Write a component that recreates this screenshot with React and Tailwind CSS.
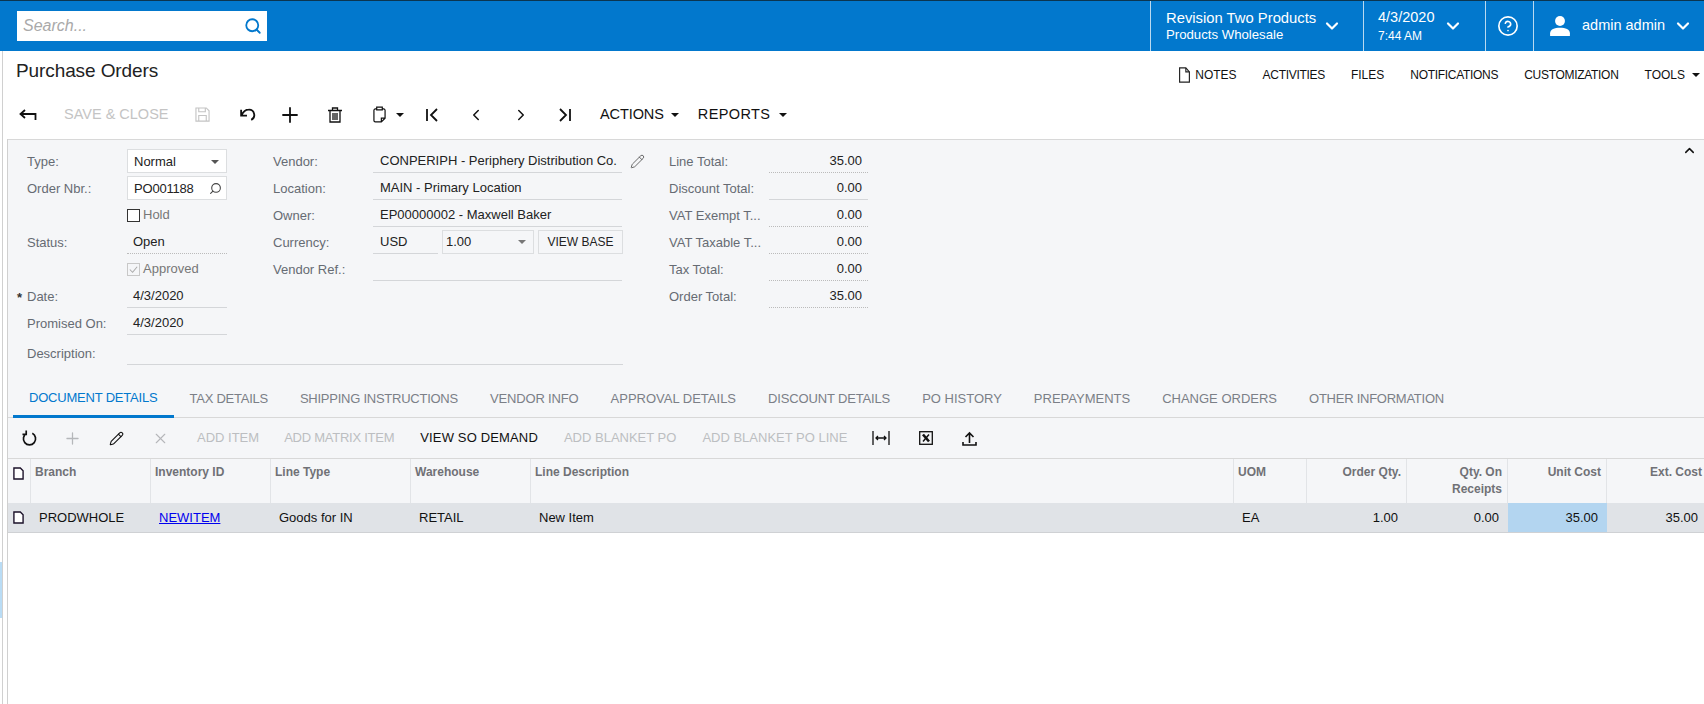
import { ChevronDown, ChevronUp, CircleHelp, Search, Plus, Pencil, X, ChevronLeft, ChevronRight } from "lucide-react";

const Caret = ({ className = "" }) => (
  <span className={`inline-block w-0 h-0 border-x-[4px] border-x-transparent border-t-[4px] border-t-current ${className}`} />
);

const DocIcon = ({ className = "" }) => (
  <svg viewBox="0 0 14 18" className={className} fill="none" stroke="currentColor" strokeWidth="1.3">
    <path d="M1.5 1h7l4 4.5V17h-11z" />
    <path d="M8.5 1v4.5h4" />
  </svg>
);

const RowDoc = () => (
  <svg viewBox="0 0 12 14" className="w-[11px] h-[13px] text-[#1a1028]" fill="#fff" stroke="currentColor" strokeWidth="1.5">
    <path d="M1 1h7l3 3v9H1z" />
  </svg>
);

function Field({ label, star, children }) {
  return (
    <div className="flex items-center h-[27px]">
      <div className="w-[119px] pl-[19px] relative text-[#666b73] truncate">
        {star && <span className="absolute left-[9px] top-[1px] font-bold text-[#333]">*</span>}
        {label}
      </div>
      {children}
    </div>
  );
}

const Under = ({ className = "", dotted, children }) => (
  <div className={`h-[24px] mb-[1px] pt-[1px] flex items-center border-b ${dotted ? "border-dotted border-[#bbb]" : "border-[#d4d6d9]"} ${className}`}>{children}</div>
);

const tabs = [
  ["TAX DETAILS", "tracking-[-0.25px]"],
  ["SHIPPING INSTRUCTIONS", "tracking-[-0.25px]"],
  ["VENDOR INFO", "tracking-[-0.15px]"],
  ["APPROVAL DETAILS", "tracking-normal"],
  ["DISCOUNT DETAILS", "tracking-[-0.15px]"],
  ["PO HISTORY", "tracking-normal"],
  ["PREPAYMENTS", "tracking-normal"],
  ["CHANGE ORDERS", "tracking-normal"],
  ["OTHER INFORMATION", "tracking-[-0.25px]"],
];
const totals = [
  ["Line Total:", "35.00", true],
  ["Discount Total:", "0.00", false],
  ["VAT Exempt T...", "0.00", true],
  ["VAT Taxable T...", "0.00", true],
  ["Tax Total:", "0.00", true],
  ["Order Total:", "35.00", true],
];

const HeadCell = ({ className = "", children }) => (
  <div className={`h-full border-r border-[#e2e4e7] pl-[4px] pr-[5px] pt-[5px] font-bold text-[12px] leading-[17px] text-[#707176] ${className}`}>{children}</div>
);

const Cell = ({ className = "", children }) => (
  <div className={`h-full flex items-center pt-[1px] pl-[8px] pr-[9px] ${className}`}>{children}</div>
);

export default function App() {
  return (
    <div className="w-[1704px] h-[704px] overflow-hidden bg-white text-[13px] text-[#222] font-['Liberation_Sans',Arial,sans-serif]">
      {/* top bar */}
      <div className="h-[51px] flex items-stretch bg-[#0278cd] border-t border-[#0b3550] text-white">
        <div className="flex-1 pl-[17px] pt-[10px]">
          <div className="w-[250px] h-[30px] bg-white flex items-center justify-between pl-[6px] pr-[5px]">
            <span className="italic text-[16px] text-[#a9a9a9]">Search...</span>
            <Search className="w-[18px] h-[18px] text-[#0278cd]" strokeWidth={2.4} />
          </div>
        </div>
        <div className="w-[213px] border-l border-[#b9d9f0] pl-[15px] flex items-center">
          <div className="w-[153px] leading-none">
            <div className="text-[14.8px]">Revision Two Products</div>
            <div className="text-[13.2px] mt-[3px]">Products Wholesale</div>
          </div>
          <ChevronDown className="w-[20px] h-[20px] ml-[3px]" strokeWidth={2.6} />
        </div>
        <div className="w-[122px] border-l border-[#b9d9f0] pl-[14px] flex items-center">
          <div className="w-[65px] leading-none">
            <div className="text-[14.5px]">4/3/2020</div>
            <div className="text-[12px] mt-[5px]">7:44 AM</div>
          </div>
          <ChevronDown className="w-[20px] h-[20px]" strokeWidth={2.6} />
        </div>
        <div className="w-[48px] border-l border-[#b9d9f0] flex items-center justify-center pr-[3px]">
          <CircleHelp className="w-[22px] h-[22px]" strokeWidth={1.8} />
        </div>
        <div className="w-[171px] border-l border-[#b9d9f0] flex items-center pl-[15px]">
          <svg viewBox="0 0 20 20" className="w-[22px] h-[22px]" fill="currentColor">
            <circle cx="10" cy="5.5" r="4.5" />
            <path d="M1 19v-2.5C1 13 5 11.5 10 11.5s9 1.5 9 5V19z" />
          </svg>
          <span className="text-[14.5px] ml-[11px]">admin admin</span>
          <ChevronDown className="w-[20px] h-[20px] ml-[8px]" strokeWidth={2.6} />
        </div>
      </div>

      <div className="relative ml-[2px] border-l border-[#d0d0d0] h-[653px]">
        <div className="absolute -left-[3px] top-[511px] w-[2px] h-[56px] bg-[#b9dcf5]" />

        {/* title row */}
        <div className="h-[45px] flex items-center justify-between pl-[13px] pr-[4px]">
          <div className="text-[19px] tracking-[-0.1px] text-[#222] -mt-[5px]">Purchase Orders</div>
          <div className="flex items-center text-[12px] text-[#111] mt-[2px]">
            <DocIcon className="w-[13px] h-[16px] text-[#222] mr-[4px]" />
            <span>NOTES</span>
            <span className="ml-[26px] tracking-[-0.3px]">ACTIVITIES</span>
            <span className="ml-[26px]">FILES</span>
            <span className="ml-[26px] tracking-[-0.3px]">NOTIFICATIONS</span>
            <span className="ml-[26px] tracking-[-0.3px]">CUSTOMIZATION</span>
            <span className="ml-[26px]">TOOLS</span>
            <Caret className="ml-[7px]" />
          </div>
        </div>

        {/* main toolbar */}
        <div className="h-[43px] flex items-center text-[#111] pb-[6px]">
          <svg viewBox="0 0 18 12" className="w-[18px] h-[12px] ml-[16px]" fill="none" stroke="currentColor" strokeWidth="1.8">
            <path d="M6 1 1.5 5 6 9M2 5h14.5v6" />
          </svg>
          <span className="ml-[27px] w-[106px] text-[14.5px] text-[#c4c4c4] whitespace-nowrap">SAVE &amp; CLOSE</span>
          <svg viewBox="0 0 16 16" className="w-[15px] h-[15px] ml-[25px] text-[#c4c4c4]" fill="none" stroke="currentColor" strokeWidth="1.2">
            <path d="M1 1h11l3 3v11H1zM4 1v4h7V1M4 15V9h8v6" />
          </svg>
          <svg viewBox="0 0 16 14" className="w-[17px] h-[15px] ml-[29px]" fill="none" stroke="currentColor" strokeWidth="1.7">
            <path d="M2 2.5V8h5.5M2.500 7.500C4 4.500 6.500 2.500 9 2.500a5 5 0 0 1 2.500 9.500" />
          </svg>
          <Plus className="w-[24px] h-[24px] ml-[22px]" strokeWidth={1.8} />
          <svg viewBox="0 0 14 16" className="w-[14px] h-[16px] ml-[26px]" fill="none" stroke="currentColor" strokeWidth="1.3">
            <path d="M0 3.500h14M4.500 3V1h5v2M2 3.500V15h10V3.500M5 6v7M7 6v7M9 6v7" />
          </svg>
          <svg viewBox="0 0 14 18" className="w-[13px] h-[17px] ml-[31px]" fill="none" stroke="currentColor" strokeWidth="1.3">
            <path d="M4 3H2.500A1.500 1.500 0 0 0 1 4.500v11A1.500 1.500 0 0 0 2.500 17H9l4-4V4.500A1.500 1.500 0 0 0 11.500 3H10M4 1h6v3H4zM9 17v-4h4" />
          </svg>
          <Caret className="ml-[10px]" />
          <svg viewBox="0 0 14 14" className="w-[14px] h-[14px] ml-[21px]" fill="none" stroke="currentColor" strokeWidth="1.8">
            <path d="M2 1v12M12 1 6 7l6 6" />
          </svg>
          <ChevronLeft className="w-[18px] h-[18px] ml-[28px]" strokeWidth={2} />
          <ChevronRight className="w-[18px] h-[18px] ml-[27px]" strokeWidth={2} />
          <svg viewBox="0 0 14 14" className="w-[14px] h-[14px] ml-[28px]" fill="none" stroke="currentColor" strokeWidth="1.8">
            <path d="M12 1v12M2 1l6 6-6 6" />
          </svg>
          <span className="ml-[28px] text-[14.5px] tracking-[-0.1px]">ACTIONS</span>
          <Caret className="ml-[7px]" />
          <span className="ml-[19px] text-[14.5px] tracking-[0.4px]">REPORTS</span>
          <Caret className="ml-[9px]" />
        </div>

        {/* form, tabs, grid */}
        <div className="ml-[4px] h-[608px] border-l border-[#d0d0d0]">
          <div className="bg-[#f5f6f8] border-t border-[#d8d8d8]">
            <div className="relative h-[243px]">
              <ChevronUp className="absolute right-[7px] top-[3px] w-[15px] h-[15px] text-[#111]" strokeWidth={2.4} />
              <div className="flex pt-[8px]">
                <div className="w-[265px]">
                  <Field label="Type:">
                    <div className="w-[100px] h-[24px] mb-[1px] pt-[1px] bg-white border border-[#dcdee0] flex items-center justify-between pl-[6px] pr-[7px]">
                      Normal <Caret className="text-[#555]" />
                    </div>
                  </Field>
                  <Field label="Order Nbr.:">
                    <div className="w-[100px] h-[24px] mb-[1px] pt-[1px] bg-white border border-[#dcdee0] flex items-center justify-between pl-[6px] pr-[4px] tracking-[-0.2px]">
                      PO001188 <Search className="w-[13px] h-[13px] -scale-x-100 text-[#444]" strokeWidth={2} />
                    </div>
                  </Field>
                  <Field label="">
                    <span className="w-[13px] h-[13px] border border-[#333] bg-white" />
                    <span className="ml-[3px] pb-[2px] text-[#777]">Hold</span>
                  </Field>
                  <Field label="Status:">
                    <Under dotted className="w-[100px] pl-[6px]">Open</Under>
                  </Field>
                  <Field label="">
                    <span className="w-[13px] h-[13px] border border-[#c8c8c8] flex items-center justify-center">
                      <svg viewBox="0 0 12 12" className="w-[11px] h-[11px] text-[#aaa]" fill="none" stroke="currentColor" strokeWidth="1.1"><path d="m2 6 3 3 5-6" /></svg>
                    </span>
                    <span className="ml-[3px] pb-[2px] text-[#777]">Approved</span>
                  </Field>
                  <Field label="Date:" star>
                    <Under className="w-[100px] pl-[6px]">4/3/2020</Under>
                  </Field>
                  <Field label="Promised On:">
                    <Under className="w-[100px] pl-[6px]">4/3/2020</Under>
                  </Field>
                </div>
                <div className="w-[396px]">
                  <div className="flex items-center h-[27px]">
                    <div className="w-[100px] text-[#666b73]">Vendor:</div>
                    <Under className="w-[249px] pl-[7px] whitespace-nowrap">CONPERIPH - Periphery Distribution Co.</Under>
                    <Pencil className="w-[15px] h-[15px] ml-[8px] text-[#555]" strokeWidth={1.4} />
                  </div>
                  <div className="flex items-center h-[27px]">
                    <div className="w-[100px] text-[#666b73]">Location:</div>
                    <Under className="w-[249px] pl-[7px]">MAIN - Primary Location</Under>
                  </div>
                  <div className="flex items-center h-[27px]">
                    <div className="w-[100px] text-[#666b73]">Owner:</div>
                    <Under className="w-[249px] pl-[7px]">EP00000002 - Maxwell Baker</Under>
                  </div>
                  <div className="flex items-center h-[27px]">
                    <div className="w-[100px] text-[#666b73]">Currency:</div>
                    <Under className="w-[65px] pl-[7px]">USD</Under>
                    <div className="w-[92px] h-[24px] mb-[1px] ml-[4px] border border-[#dcdee0] flex items-center justify-between pl-[3px] pr-[7px]">
                      1.00 <Caret className="text-[#777]" />
                    </div>
                    <div className="w-[85px] h-[24px] mb-[1px] ml-[4px] border border-[#dcdee0] flex items-center justify-center text-[12px]">VIEW BASE</div>
                  </div>
                  <div className="flex items-center h-[27px]">
                    <div className="w-[100px] text-[#666b73]">Vendor Ref.:</div>
                    <Under className="w-[249px]" />
                  </div>
                </div>
                <div className="w-[199px]">
                  {totals.map(([label, value, dotted]) => (
                    <div key={label} className="flex items-center h-[27px]">
                      <div className="w-[100px] text-[#666b73] whitespace-nowrap">{label}</div>
                      <Under dotted={dotted} className="w-[99px] justify-end pr-[6px]">{value}</Under>
                    </div>
                  ))}
                </div>
              </div>
              <div className="flex items-center h-[27px] mt-[3px]">
                <div className="w-[119px] pl-[19px] text-[#666b73]">Description:</div>
                <Under className="w-[496px]" />
              </div>
            </div>

            {/* tabs */}
            <div className="h-[35px] flex items-stretch pl-[5px] border-b border-[#d8d8d8] text-[#7b7f87]">
              <div className="px-[16px] flex items-center pb-[3px] -mb-[1px] border-b-[3px] border-[#0278cd] text-[#0278cd] tracking-[-0.2px]">DOCUMENT DETAILS</div>
              {tabs.map(([t, track]) => (
                <div key={t} className={`px-[16px] flex items-center pb-[3px] whitespace-nowrap ${track}`}>{t}</div>
              ))}
            </div>

            {/* grid toolbar */}
            <div className="h-[41px] flex items-center border-b border-[#d8d8d8] text-[#111] whitespace-nowrap">
              <svg viewBox="0 0 16 18" className="w-[15px] h-[17px] ml-[14px]" fill="none" stroke="currentColor" strokeWidth="1.8">
                <path d="M5 3.500a6.500 6.500 0 1 0 6 0M4.500 0.500v4h-4" />
              </svg>
              <Plus className="w-[19px] h-[19px] ml-[26px] text-[#b5b7ba]" strokeWidth={1.6} />
              <Pencil className="w-[15px] h-[15px] ml-[27px]" strokeWidth={1.7} />
              <X className="w-[17px] h-[17px] ml-[28px] text-[#b5b7ba]" strokeWidth={1.6} />
              <span className="ml-[28px] text-[#bcbec1]">ADD ITEM</span>
              <span className="ml-[25px] text-[#bcbec1] tracking-[-0.25px]">ADD MATRIX ITEM</span>
              <span className="ml-[26px] tracking-[0.15px]">VIEW SO DEMAND</span>
              <span className="ml-[26px] text-[#bcbec1]">ADD BLANKET PO</span>
              <span className="ml-[26px] text-[#bcbec1]">ADD BLANKET PO LINE</span>
              <svg viewBox="0 0 18 14" className="w-[18px] h-[14px] ml-[25px]" fill="none" stroke="currentColor" strokeWidth="1.3">
                <path d="M1 0v14M17 0v14M4 7h10M6 5 4 7l2 2M12 5l2 2-2 2" />
              </svg>
              <svg viewBox="0 0 14 14" className="w-[14px] h-[14px] ml-[29px]" fill="none" stroke="currentColor">
                <rect x="0.7" y="0.7" width="12.6" height="12.6" strokeWidth="1.3" />
                <path d="m4 3.500 6 7" strokeWidth="2.600" />
                <path d="m10 3.500-6 7" strokeWidth="1.500" />
              </svg>
              <svg viewBox="0 0 15 15" className="w-[15px] h-[15px] ml-[29px]" fill="none" stroke="currentColor" strokeWidth="1.6">
                <path d="M7.500 12V2M3.500 6l4-4 4 4M1 11v3h13v-3" />
              </svg>
            </div>

            {/* grid head */}
            <div className="h-[44px] flex">
              <div className="w-[23px] h-full border-r border-[#e2e4e7] pl-[5px] pt-[8px]"><RowDoc /></div>
              <HeadCell className="w-[120px]">Branch</HeadCell>
              <HeadCell className="w-[120px]">Inventory ID</HeadCell>
              <HeadCell className="w-[140px]">Line Type</HeadCell>
              <HeadCell className="w-[120px]">Warehouse</HeadCell>
              <HeadCell className="w-[703px]">Line Description</HeadCell>
              <HeadCell className="w-[73px]">UOM</HeadCell>
              <HeadCell className="w-[100px] text-right">Order Qty.</HeadCell>
              <HeadCell className="w-[101px] text-right">Qty. On Receipts</HeadCell>
              <HeadCell className="w-[99px] text-right">Unit Cost</HeadCell>
              <HeadCell className="flex-1 text-right !pr-[2px] border-r-0">Ext. Cost</HeadCell>
            </div>
          </div>

          {/* grid row */}
          <div className="h-[30px] flex bg-[#e0e3e7] border-b border-[#cfd1d4] text-[#111]">
            <div className="w-[23px] pl-[5px] flex items-center"><RowDoc /></div>
            <Cell className="w-[120px]">PRODWHOLE</Cell>
            <Cell className="w-[120px]"><span className="underline text-[#0000ee]">NEWITEM</span></Cell>
            <Cell className="w-[140px]">Goods for IN</Cell>
            <Cell className="w-[120px]">RETAIL</Cell>
            <Cell className="w-[703px]">New Item</Cell>
            <Cell className="w-[73px]">EA</Cell>
            <Cell className="w-[100px] justify-end">1.00</Cell>
            <Cell className="w-[101px] justify-end">0.00</Cell>
            <Cell className="w-[99px] justify-end bg-[#b3d5f0]">35.00</Cell>
            <Cell className="flex-1 justify-end !pr-[6px]">35.00</Cell>
          </div>
        </div>
      </div>
    </div>
  );
}
